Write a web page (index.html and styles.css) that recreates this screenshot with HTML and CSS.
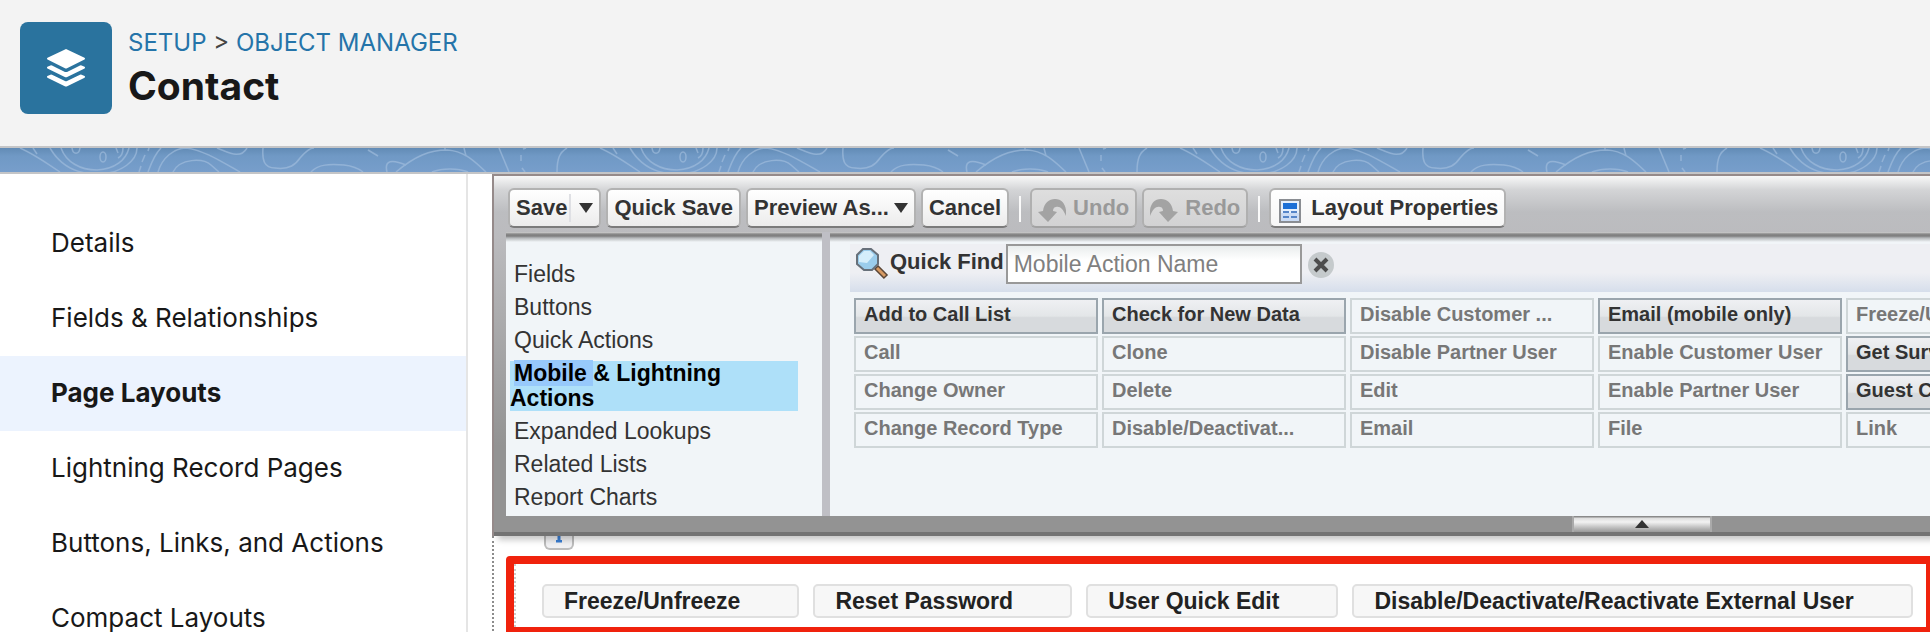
FILE: index.html
```html
<!DOCTYPE html>
<html lang="en">
<head>
<meta charset="utf-8">
<title>Contact - Object Manager</title>
<link rel="stylesheet" href="styles.css">
</head>
<body>
<header class="page-header">
  <div class="object-icon">
    <svg width="40" height="40" viewBox="0 0 40 40" fill="#fff" aria-hidden="true">
      <path d="M20 1 L38.500 9.800 Q39.800 10.700 38.500 11.600 L21 20.200 Q20 20.700 19 20.200 L1.500 11.600 Q.2 10.700 1.500 9.800 L19 1.400 Q20 .8 21 1.400Z"/>
      <path d="M1.400 18.800 L4.400 17.500 Q5.200 17.200 6 17.600 L19 23.900 Q20 24.300 21 23.900 L34 17.600 Q34.800 17.200 35.600 17.500 L38.600 18.800 Q39.600 19.600 38.600 20.600 L21.200 29 Q20 29.500 18.800 29 L1.400 20.600 Q.4 19.600 1.400 18.800Z"/>
      <path d="M1.400 28 L4.400 26.700 Q5.200 26.400 6 26.800 L19 33.100 Q20 33.500 21 33.100 L34 26.800 Q34.800 26.400 35.600 26.700 L38.600 28 Q39.600 28.800 38.600 29.800 L21.200 38.200 Q20 38.700 18.800 38.200 L1.400 29.800 Q.4 28.800 1.400 28Z"/>
    </svg>
  </div>
  <div class="heading">
    <nav class="crumbs"><a href="#">SETUP</a> <span>&gt;</span> <a href="#">OBJECT MANAGER</a></nav>
    <h1>Contact</h1>
  </div>
</header>

<div class="band">
  <svg width="100%" height="24" aria-hidden="true">
    <defs>
      <pattern id="contours" width="580" height="24" patternUnits="userSpaceOnUse">
        <g fill="none" stroke="#a6c1e0" stroke-width="1.500" opacity=".6">
          <path d="M50 0 C60 17 76 26 97 26 C122 26 137 12 137 0"/>
          <path d="M61 0 C66 14 80 22 97 22 C115 21 126 12 129 0"/>
          <path d="M20 0 C34 6 48 16 60 24 M33 0 L37 6 M72 0 C73 7 79 7 80 0"/>
          <ellipse cx="103" cy="9" rx="3" ry="5"/>
          <path d="M116 0 L118 5 M118 10 C122 8 123 4 123 0"/>
          <path d="M145 7 L142 14 M141 18 L139 24 M149 0 L148 3"/>
          <path d="M161 0 C154 7 151 16 148 24"/>
          <path d="M158 24 C162 10 174 0 186 0 C204 2 222 14 240 24"/>
          <path d="M173 24 C180 10 203 10 211 17 L219 24"/>
          <path d="M217 0 C228 4 240 12 247 0"/>
          <path d="M263 0 C262 12 264 20 275 20 C290 22 296 16 300 10 C306 3 310 0 314 0"/>
          <path d="M311 24 C318 16 330 16 344 17 C353 18 358 20 363 24"/>
          <path d="M368 2 L378 8 M387 24 C384 12 392 11 406 17"/>
          <path d="M396 24 C415 8 430 2 447 2 C465 3 475 14 486 24"/>
          <path d="M432 24 C442 20 458 20 468 24 M445 0 V3 M464 0 L466 8"/>
          <path d="M499 0 L509 24 M521 7 V13 M522 20 L525 24 M523 1 L526 0"/>
          <path d="M557 24 C557 10 560 4 567 0"/>
        </g>
      </pattern>
    </defs>
    <rect width="100%" height="24" fill="url(#contours)"/>
  </svg>
</div>

<div class="body">
  <nav class="sidebar">
    <a href="#">Details</a>
    <a href="#">Fields &amp; Relationships</a>
    <a href="#" class="current" aria-current="page">Page Layouts</a>
    <a href="#">Lightning Record Pages</a>
    <a href="#">Buttons, Links, and Actions</a>
    <a href="#">Compact Layouts</a>
  </nav>

  <main class="editor">
    <section class="panel">
      <div class="toolbar">
        <button class="btn" type="button">Save<i class="divider"></i><i class="caret"></i></button>
        <button class="btn" type="button">Quick Save</button>
        <button class="btn" type="button">Preview As...<i class="caret"></i></button>
        <button class="btn" type="button">Cancel</button>
        <i class="sep"></i>
        <button class="btn" type="button" disabled>
          <svg width="28" height="26" viewBox="0 0 28 26" fill="#a3a3a3" aria-hidden="true"><path d="M0 15 L5 14 C6 6 11 2 17 2 C25 2 29 9 28 19 C25 12 22 9 18 10 C16 10 15 12 15 14 L19 15 L10 25Z"/></svg>
          Undo</button>
        <button class="btn" type="button" disabled>
          <svg width="28" height="26" viewBox="0 0 28 26" fill="#a3a3a3" aria-hidden="true"><path d="M28 15 L23 14 C22 6 17 2 11 2 C3 2 -1 9 0 19 C3 12 6 9 10 10 C12 10 13 12 13 14 L9 15 L18 25Z"/></svg>
          Redo</button>
        <i class="sep"></i>
        <button class="btn props" type="button">
          <svg width="22" height="24" viewBox="0 0 22 24" aria-hidden="true">
            <rect x="1" y="1" width="20" height="22" fill="#e4effc" stroke="#8a8d92" stroke-width="2"/>
            <rect x="2" y="14" width="18" height="8" fill="#cbdcf4"/>
            <rect x="4" y="4" width="14" height="6" fill="#1b6fd6"/>
            <path d="M4 13H10M12 13H18M4 18H10M12 18H18" stroke="#5585c8" stroke-width="2"/>
          </svg>
          Layout Properties</button>
      </div>

      <div class="panes">
        <div class="pane">
          <ul class="categories">
            <li>Fields</li>
            <li>Buttons</li>
            <li>Quick Actions</li>
            <li class="active"><span>Mobile </span>&amp; Lightning Actions</li>
            <li>Expanded Lookups</li>
            <li>Related Lists</li>
            <li>Report Charts</li>
          </ul>
        </div>
        <div class="pane palette">
          <div class="quickfind">
            <svg width="34" height="34" viewBox="0 0 34 34" aria-hidden="true">
              <path d="M21 20 L31 30" stroke="#5b4636" stroke-width="6"/>
              <path d="M22 21 L30 29" stroke="#d79a63" stroke-width="3"/>
              <path d="M8 2 H16 L23 8 V17 L17 23 H9 L2 17 V8Z" fill="#9bcdec" stroke="#67707a" stroke-width="2"/>
              <path d="M9 4 H15 L19 8 L12 16 L4 15 V9Z" fill="#d5eefb"/>
            </svg>
            <label for="find">Quick Find</label>
            <input id="find" type="text" placeholder="Mobile Action Name">
            <button class="clear" type="button" aria-label="Clear">
              <svg width="26" height="26" viewBox="0 0 26 26"><circle cx="13" cy="13" r="13" fill="#c5cacc"/><path d="M7 7 L19 19 M19 7 L7 19" stroke="#4d4d4d" stroke-width="4"/></svg>
            </button>
          </div>
          <div class="grid">
            <div class="cell on">Add to Call List</div><div class="cell">Call</div><div class="cell">Change Owner</div><div class="cell">Change Record Type</div>
            <div class="cell on">Check for New Data</div><div class="cell">Clone</div><div class="cell">Delete</div><div class="cell">Disable/Deactivat...</div>
            <div class="cell">Disable Customer ...</div><div class="cell">Disable Partner User</div><div class="cell">Edit</div><div class="cell">Email</div>
            <div class="cell on">Email (mobile only)</div><div class="cell">Enable Customer User</div><div class="cell">Enable Partner User</div><div class="cell">File</div>
            <div class="cell">Freeze/Unfreeze</div><div class="cell on">Get Survey Invitation</div><div class="cell on">Guest Check-In</div><div class="cell">Link</div>
          </div>
        </div>
      </div>
      <div class="panel-foot">
        <button class="handle" type="button" aria-label="Collapse"><svg width="14" height="8" viewBox="0 0 14 8"><path d="M7 0 L14 8 H0Z" fill="#333"/></svg></button>
      </div>
    </section>

    <section class="canvas">
      <div class="canvas-top"><div class="tab"><svg width="8" height="7" viewBox="0 0 8 7"><path d="M2.500 0H5.500V4H7V6.500H1V4H2.500Z" fill="#3a7fd5"/></svg></div></div>
      <div class="highlight">
        <div class="actions">
          <div class="action">Freeze/Unfreeze</div>
          <div class="action">Reset Password</div>
          <div class="action">User Quick Edit</div>
          <div class="action">Disable/Deactivate/Reactivate External User</div>
        </div>
      </div>
    </section>
  </main>
</div>
</body>
</html>
```
FILE: styles.css
```css
* { box-sizing: border-box; }
body {
  margin: 0;
  height: 100vh;
  overflow: hidden;
  display: flex;
  flex-direction: column;
  background: #fff;
  font-family: "Liberation Sans", Arial, sans-serif;
  font-size: 22px;
  color: #333;
}
button, input { font: inherit; }

.page-header {
  display: flex;
  flex: none;
  gap: 16px;
  padding: 22px 20px 32px;
  background: #f3f3f3;
  font-family: Inter, sans-serif;
}
.object-icon {
  display: flex;
  align-items: center;
  justify-content: center;
  width: 92px;
  height: 92px;
  border-radius: 8px;
  background: #2a739e;
}
.crumbs {
  padding-top: 4px;
  font-size: 24px;
  line-height: 34px;
  color: #444;
}
.crumbs a { color: #2574a9; text-decoration: none; }
h1 {
  margin: 0;
  font-size: 39px;
  line-height: 52px;
  font-weight: 700;
  color: #181818;
}

.band {
  flex: none;
  height: 28px;
  border-top: 2px solid #c4c5c7;
  border-bottom: 2px solid #c4c5c7;
  background: linear-gradient(#628bb5, #7099c5 8px, #779ecb);
}
.band svg { display: block; }

.body { display: flex; flex: 1; min-height: 0; }
.sidebar {
  flex: none;
  width: 468px;
  padding-top: 32px;
  border-right: 2px solid #e5e5e5;
  font-family: Inter, sans-serif;
  overflow: hidden;
}
.sidebar a {
  display: block;
  height: 75px;
  padding-left: 51px;
  font-size: 26px;
  line-height: 74px;
  color: #181818;
  text-decoration: none;
}
.sidebar .current { background: #ecf3fe; font-weight: 700; }

.editor {
  flex: 1;
  min-width: 0;
  margin-left: 24px;
  display: flex;
  flex-direction: column;
  overflow: hidden;
}
.panel {
  flex: none;
  position: relative;
  border: 2px solid #958a8a;
  border-width: 2px 0 0 2px;
  padding-left: 12px;
  background: linear-gradient(#f8f8f8, #d3d4d6 14px, #bcbdc0 36px, #bbbbbe 60px, #939393 270px);
  box-shadow: 6px 4px 6px rgba(0, 0, 0, .22);
}
.toolbar {
  display: flex;
  gap: 5px;
  padding: 12px 0 4px 2px;
  white-space: nowrap;
}
.btn {
  display: flex;
  align-items: center;
  height: 40px;
  padding: 0 6px;
  border: 2px solid #b2b2b2;
  border-bottom-color: #7b7b7b;
  border-radius: 6px;
  background: linear-gradient(#fff, #ececec);
  font-weight: 700;
  line-height: 36px;
  color: #333;
}
.btn:disabled {
  gap: 7px;
  border-color: #b0b0b0;
  border-bottom-color: #a2a2a2;
  background: linear-gradient(#dedede, #d2d2d3);
  color: #999;
}
.btn:disabled svg { margin-top: 4px; }
.btn.props { gap: 10px; padding-left: 8px; background: linear-gradient(#fff, #f6f6f6); }
.props svg { margin-top: 6px; }
.caret {
  margin-left: 5px;
  border: 7px solid transparent;
  border-top: 10px solid #333;
  border-bottom: 0;
}
.divider { width: 2px; height: 28px; margin: 0 3px 0 2px; background: #dfe0e4; }
.sep { width: 2px; height: 26px; margin: 8px 4px 0 5px; background: #fafafa; }

.panes {
  display: grid;
  grid-template-columns: 316px minmax(0, 1fr);
  gap: 8px;
  height: 284px;
  background: #bfbfc5;
}
.pane {
  overflow: hidden;
  background: linear-gradient(#d5d5d5, #8a8a8a 2px, #7d7d7d 4px, #b5b8ba 6px, #f1f5f8 10px, #f1f5f8);
}
.categories {
  display: flex;
  flex-direction: column;
  gap: 8px;
  height: 274px;
  margin: 0;
  padding: 30px 24px 0 4px;
  list-style: none;
  font-size: 23px;
  line-height: 25px;
  overflow: hidden;
  white-space: nowrap;
}
.categories li { text-indent: 4px; flex: none; }
.categories .active {
  background: #aee0f9;
  color: #000;
  font-weight: 700;
  white-space: normal;
}
.active span { background: #97c9fb; white-space: pre; }

.palette { padding: 12px 0 0 20px; }
.quickfind {
  display: flex;
  height: 48px;
  padding-left: 5px;
  background: linear-gradient(#eeeff3 60%, #d6deeb);
}
.quickfind > svg { flex: none; margin-top: 3px; }
.quickfind label {
  margin: 0 2px 0 1px;
  font-weight: 700;
  line-height: 36px;
  white-space: nowrap;
}
.quickfind input {
  width: 296px;
  height: 40px;
  padding: 0 6px;
  border: 2px solid #999;
  background: linear-gradient(#e9eded, #fff 14px);
  font-size: 23px;
  color: #333;
}
.quickfind input::placeholder { color: #808080; opacity: 1; }
.clear { height: 26px; margin: 8px 0 0 6px; padding: 0; border: 0; background: none; }
.clear svg { display: block; }

.grid {
  display: grid;
  grid-auto-flow: column;
  grid-template-rows: repeat(4, 36px);
  grid-auto-columns: 244px;
  gap: 2px 4px;
  margin: 6px 0 0 4px;
}
.cell {
  padding: 0 8px;
  border: 2px solid #cfd6d8;
  font-size: 20px;
  line-height: 28px;
  font-weight: 700;
  color: #777;
  white-space: nowrap;
  overflow: hidden;
}
.cell.on {
  border-color: #9aa5ad;
  background: linear-gradient(#eff0f3, #e3e6e8 50%, #d7dadd 55%, #d7dadd);
  color: #333;
}
.panel-foot {
  display: flex;
  height: 20px;
  margin-left: -12px;
  padding-left: 1078px;
  border-bottom: 4px solid #737373;
  background: #939393;
}
.handle {
  display: flex;
  justify-content: center;
  width: 140px;
  height: 16px;
  padding: 4px 0 0;
  border: 2px solid #aaa;
  border-width: 0 2px;
  background: linear-gradient(#8a8a8a 1px, #ddd 2px, #f2f2f2 6px, #bbb 12px, #999);
}

.canvas { flex: 1; border-left: 2px dotted #8c8c8c; }
.canvas-top { height: 20px; padding-left: 50px; }
.tab {
  display: flex;
  justify-content: center;
  width: 30px;
  height: 14px;
  border: 2px solid #bcbcbc;
  border-top: 0;
  border-radius: 0 0 6px 6px;
  background: #f1f1f3;
}
.highlight {
  margin: 0 -4px 0 12px;
  border: 8px solid #f0220d;
  border-radius: 4px 0 0 0;
}
.actions {
  display: flex;
  gap: 14px;
  padding: 20px 0 9px 26px;
  border-left: 2px dotted #ccc;
}
.action {
  flex: none;
  height: 34px;
  padding: 0 57px 0 20px;
  border: 2px solid #e0e0e0;
  border-radius: 5px;
  background: #f7f7f7;
  font-size: 23px;
  font-weight: 700;
  line-height: 30px;
  color: #222;
  white-space: nowrap;
}
```
